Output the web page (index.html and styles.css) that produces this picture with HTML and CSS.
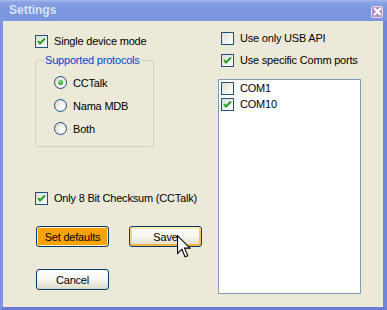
FILE: index.html
```html
<!DOCTYPE html>
<html lang="en">

<head>
    <meta charset="UTF-8">
    <title>Settings</title>
    <link rel="stylesheet" href="styles.css">
</head>

<body>
    <div class="window">
        <div class="titlebar">
            <span class="title">Settings</span>
            <span class="close">
                <svg width="9" height="9" viewBox="0 0 9 9"><path d="M1 1 L8 8 M8 1 L1 8" stroke="#fff" stroke-width="2" /></svg>
            </span>
        </div>

        <div class="frame">
            <div class="client">
                <div class="col-left">
                    <label class="check single"><span class="box"><svg width="11" height="11" viewBox="0 0 11 11"><path d="M2 5 L4 7.5 L9 2.5" /></svg></span>Single device mode</label>

                    <fieldset class="group">
                        <legend>Supported protocols</legend>
                        <label class="radio"><span class="dot on"></span>CCTalk</label>
                        <label class="radio"><span class="dot"></span>Nama MDB</label>
                        <label class="radio"><span class="dot"></span>Both</label>
                    </fieldset>

                    <label class="check checksum"><span class="box"><svg width="11" height="11" viewBox="0 0 11 11"><path d="M2 5 L4 7.5 L9 2.5" /></svg></span>Only 8 Bit Checksum (CCTalk)</label>

                    <div class="buttons">
                        <button class="btn btn-orange">Set defaults</button>
                        <button class="btn btn-hot">Save</button>
                    </div>
                    <button class="btn btn-cancel">Cancel</button>
                </div>

                <div class="col-right">
                    <label class="check"><span class="box empty"></span>Use only USB API</label>
                    <label class="check comm"><span class="box"><svg width="11" height="11" viewBox="0 0 11 11"><path d="M2 5 L4 7.5 L9 2.5" /></svg></span>Use specific Comm ports</label>

                    <div class="listbox">
                        <label class="check item"><span class="box empty"></span>COM1</label>
                        <label class="check item"><span class="box"><svg width="11" height="11" viewBox="0 0 11 11"><path d="M2 5 L4 7.5 L9 2.5" /></svg></span>COM10</label>
                    </div>
                </div>
            </div>
        </div>

        <!-- mouse pointer over Save -->
        <svg class="cursor" width="14" height="23" viewBox="0 0 13 21">
            <path d="M0.5 0.5 L0.5 17 L4.5 13 L7.5 20 L10 19 L7 12 L12 12 Z" fill="#fff" stroke="#000" stroke-width="1" />
        </svg>
    </div>
</body>

</html>
```

FILE: styles.css
```css
body {
    margin: 0;
    font-family: "Liberation Sans", Arial, sans-serif;
    font-size: 11px;
    letter-spacing: -0.2px;
    color: #000;
}

.window {
    position: relative;
    width: 387px;
    height: 310px;
    display: flex;
    flex-direction: column;
    background: #7b95de;
}

.titlebar {
    height: 21px;
    display: flex;
    align-items: center;
    justify-content: space-between;
    padding: 0 4px 0 9px;
    background: linear-gradient(to bottom, #aabdee 0, #8ca4e5 2px, #7c96de 8px, #7b95de 100%);
}

.title {
    font-weight: bold;
    font-size: 12px;
    letter-spacing: 0;
    color: #d8e4f8;
    margin-top: -1px;
}

.close {
    width: 10px;
    height: 10px;
    margin-top: 2px;
    display: flex;
    align-items: center;
    justify-content: center;
    border: 1px solid #e6dcf0;
    border-radius: 2px;
    background: #b48fbf;
}

.frame {
    flex: 1;
    display: flex;
    border-left: 3px solid #7f93e1;
    border-right: 4px solid #7084dc;
    border-bottom: 3px solid #6a78d6;
}

.client {
    flex: 1;
    display: flex;
    gap: 16px;
    padding: 11px 0 0 32px;
    background: #ece9d8;
}

.col-left {
    width: 167px;
    display: flex;
    flex-direction: column;
    align-items: flex-start;
    padding-top: 3px;
}

.col-right {
    width: 143px;
    display: flex;
    flex-direction: column;
}

/* checkboxes */
.check {
    display: flex;
    align-items: center;
    height: 13px;
    line-height: 13px;
    white-space: nowrap;
}

.check .box {
    width: 11px;
    height: 11px;
    margin-right: 6px;
    border: 1px solid #1c5180;
    background: linear-gradient(135deg, #dcdcd7 0%, #f2f2ef 60%, #fff 100%);
    display: flex;
    align-items: center;
    justify-content: center;
}

.check .box path {
    fill: none;
    stroke: #21a121;
    stroke-width: 2;
}

.col-right > .check {
    margin-left: 3px;
}

.col-right .comm {
    margin-top: 9px;
}

.checksum {
    margin-top: 45px;
}

/* group box */
.group {
    box-sizing: border-box;
    width: 119px;
    margin: 6px 0 0;
    padding: 9px 0 11px 8px;
    border: 1px solid #d0d0bf;
    border-radius: 3px;
    display: flex;
    flex-direction: column;
    gap: 10px;
}

.group legend {
    color: #0046d5;
    padding: 0 1px;
    margin: 0;
    line-height: 13px;
    white-space: nowrap;
}

.radio {
    display: flex;
    align-items: center;
    height: 13px;
    margin-left: 10px;
}

.dot {
    box-sizing: border-box;
    width: 13px;
    height: 13px;
    margin-right: 6px;
    border: 1px solid #1c5180;
    border-radius: 50%;
    background: radial-gradient(circle at 65% 65%, #fff 0%, #f0efea 40%, #d6d5cc 100%);
    display: flex;
    align-items: center;
    justify-content: center;
}

.dot.on::after {
    content: "";
    width: 5px;
    height: 5px;
    border-radius: 50%;
    background: radial-gradient(circle at 40% 40%, #8fe08f 0%, #21a121 70%);
}

/* buttons */
.buttons {
    display: flex;
    gap: 20px;
    margin: 21px 0 0 1px;
}

.btn {
    width: 73px;
    height: 21px;
    padding: 0;
    font-family: "Liberation Sans", Arial, sans-serif;
    font-size: 11px;
    letter-spacing: -0.2px;
    color: #000;
    border: 1px solid #003c74;
    border-radius: 3px;
    background: linear-gradient(to bottom, #fff 0%, #f6f5f0 50%, #e3e0d3 90%, #d6d0c5 100%);
}

.btn-orange {
    background: #faa304;
    box-shadow: inset 0 0 0 1px #fbe8c0;
}

.btn-hot {
    box-shadow: inset 0 2px 0 #ffe7a6, inset 0 -2px 0 #f4b33b, inset 2px 0 0 #fbd57a, inset -2px 0 0 #f6c55a;
}

.btn-cancel {
    margin: 22px 0 0 1px;
}

/* list of ports */
.listbox {
    box-sizing: border-box;
    height: 215px;
    margin-top: 12px;
    padding: 2px;
    border: 1px solid #7f9db9;
    background: #fff;
    display: flex;
    flex-direction: column;
    gap: 3px;
}

.listbox .item {
    height: 13px;
}

.cursor {
    position: absolute;
    left: 177px;
    top: 235px;
}
```
